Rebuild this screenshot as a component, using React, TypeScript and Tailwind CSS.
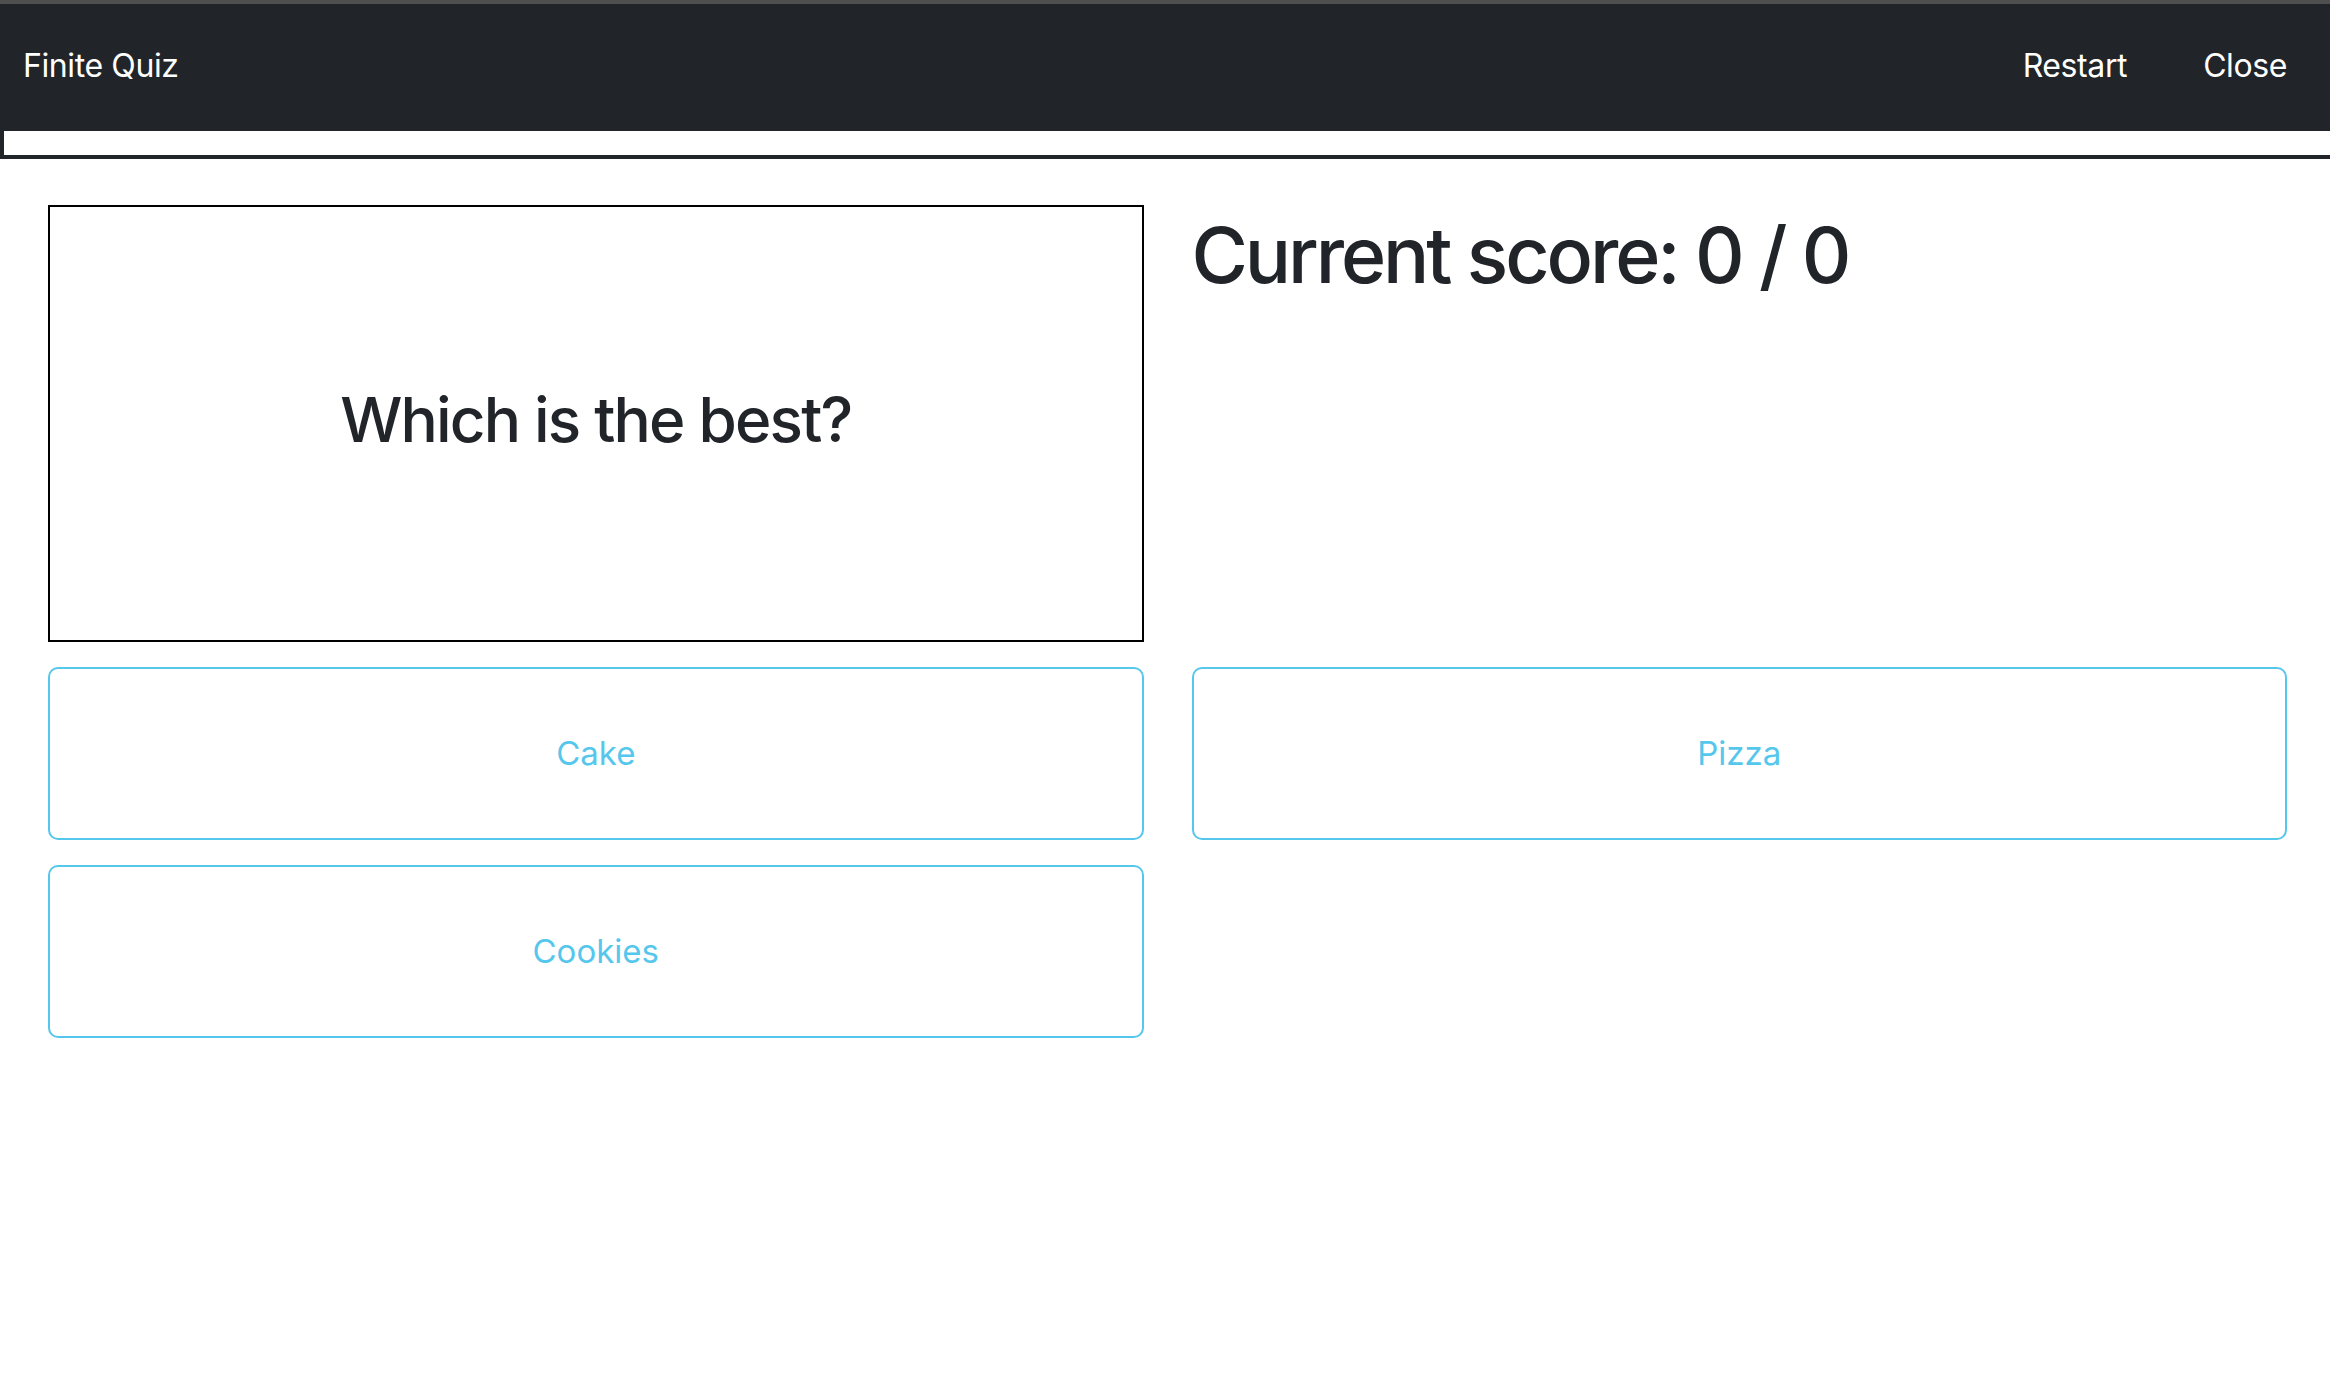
import React from "react";

const answers = ["Cake", "Pizza", "Cookies"];

export default function App() {
  return (
    <div className="min-h-screen bg-white font-['Inter','Liberation_Sans',sans-serif] text-[#212529]">
      <nav className="flex h-[131px] items-center justify-between border-t-4 border-[#4f4f4f] bg-[#212529] pb-[3px] pl-[23px] pr-[43px] tracking-[-0.4px] text-white">
        <span className="text-[32px]">Finite Quiz</span>
        <div className="flex items-center gap-[76px] text-[32px]">
          <button>Restart</button>
          <button>Close</button>
        </div>
      </nav>

      <div className="h-[28px] border-b-4 border-l-4 border-[#212529] bg-white" />

      <main className="grid grid-cols-2 gap-x-[48px] gap-y-[25px] pl-[48px] pr-[43px] pt-[46px]">
        <div className="flex h-[437px] items-center justify-center border-2 border-black pb-[8px]">
          <h2 className="text-[62px] font-medium leading-tight tracking-[-1.8px]">Which is the best?</h2>
        </div>
        <div>
          <h1 className="mt-[4px] text-[77px] font-medium leading-[1.2] tracking-[-3.1px]">Current score: 0 / 0</h1>
        </div>

        {answers.map((a) => (
          <button
            key={a}
            className="flex h-[173px] items-center justify-center rounded-[10px] border-2 border-[#56c7ec] text-[33px] text-[#56c7ec]"
          >
            {a}
          </button>
        ))}
      </main>
    </div>
  );
}
